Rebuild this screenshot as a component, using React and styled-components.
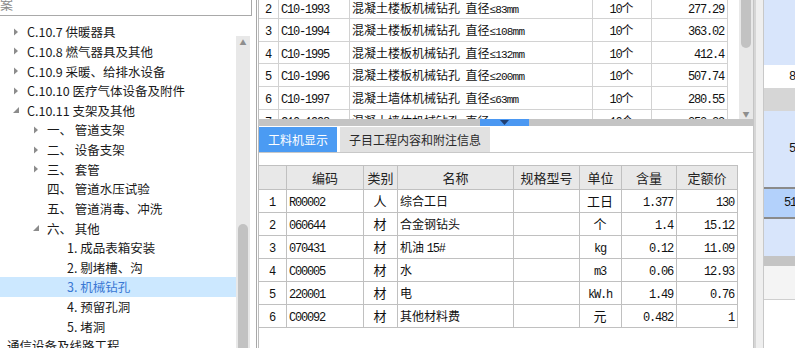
import React from 'react'
import styled, { createGlobalStyle } from 'styled-components'

const CJK = `"Noto Sans CJK SC", "Noto Sans", sans-serif`
const MONO = `"Liberation Mono", "Noto Sans CJK SC", monospace`

const GlobalStyle = createGlobalStyle`
  body { margin:0; background:#fff; overflow:hidden; }
  * { box-sizing:border-box; }
`

const tree = [
  { level: 0, arrow: 'closed', text: 'C.10.7 供暖器具' },
  { level: 0, arrow: 'closed', text: 'C.10.8 燃气器具及其他' },
  { level: 0, arrow: 'closed', text: 'C.10.9 采暖、给排水设备' },
  { level: 0, arrow: 'closed', text: 'C.10.10 医疗气体设备及附件' },
  { level: 0, arrow: 'open', text: 'C.10.11 支架及其他' },
  { level: 1, arrow: 'closed', text: '一、 管道支架' },
  { level: 1, arrow: 'closed', text: '二、 设备支架' },
  { level: 1, arrow: 'closed', text: '三、 套管' },
  { level: 1, text: '四、 管道水压试验' },
  { level: 1, text: '五、 管道消毒、冲洗' },
  { level: 1, arrow: 'open', text: '六、 其他' },
  { level: 2, text: '1. 成品表箱安装' },
  { level: 2, text: '2. 剔堵槽、沟' },
  { level: 2, text: '3. 机械钻孔', selected: true },
  { level: 2, text: '4. 预留孔洞' },
  { level: 2, text: '5. 堵洞' },
  { level: -1, text: '通信设备及线路工程' },
]

const quotas = [
  ['2', 'C10-1993', '混凝土楼板机械钻孔', '≤83mm', '10个', '277.29'],
  ['3', 'C10-1994', '混凝土楼板机械钻孔', '≤108mm', '10个', '363.02'],
  ['4', 'C10-1995', '混凝土楼板机械钻孔', '≤132mm', '10个', '412.4'],
  ['5', 'C10-1996', '混凝土楼板机械钻孔', '≤200mm', '10个', '507.74'],
  ['6', 'C10-1997', '混凝土墙体机械钻孔', '≤63mm', '10个', '280.55'],
  ['7', 'C10-1998', '混凝土墙体机械钻孔', '≤83mm', '10个', '353.23'],
]

const materials = [
  ['1', 'R00002', '人', '综合工日', '', '工日', '1.377', '130'],
  ['2', '060644', '材', '合金钢钻头', '', '个', '1.4', '15.12'],
  ['3', '070431', '材', '机油 15#', '', 'kg', '0.12', '11.09'],
  ['4', 'C00005', '材', '水', '', 'm3', '0.06', '12.93'],
  ['5', '220001', '材', '电', '', 'kW.h', '1.49', '0.76'],
  ['6', 'C00092', '材', '其他材料费', '', '元', '0.482', '1'],
]

const Arrow = ({ type }) =>
  type === 'open' ? (
    <svg width="8" height="8" viewBox="0 0 8 8">
      <path d="M7 1 L7 7 L1 7 Z" fill="#8c8c8c" />
    </svg>
  ) : (
    <svg width="8" height="8" viewBox="0 0 8 8">
      <path d="M2 0.5 L6 4 L2 7.5 Z" fill="#8c8c8c" />
    </svg>
  )

const App = () => {
  return (
    <Screen>
      <GlobalStyle />
      <Sidebar>
        <Search>案</Search>
        <TreeArea>
          <TreeList>
            {tree.map((n, i) => (
              <TreeRow key={i} $pad={n.level < 0 ? 7 : 11 + n.level * 20} $selected={n.selected}>
                {n.level >= 0 && <Slot>{n.arrow && <Arrow type={n.arrow} />}</Slot>}
                {n.text}
              </TreeRow>
            ))}
          </TreeList>
          <VScroll $top={20}>
            <ScrollArrow>▲</ScrollArrow>
            <TreeThumbGap />
            <Thumb />
          </VScroll>
        </TreeArea>
      </Sidebar>

      <Main>
        <TopPane>
          <TopClip>
            <TopGrid>
              {quotas.map((r, i) => (
                <React.Fragment key={i}>
                  <TCell $align="center"><Mono>{r[0]}</Mono></TCell>
                  <TCell><Mono>{r[1]}</Mono></TCell>
                  <TCell>
                    {r[2]}&nbsp;&nbsp;直径<Mono $small>{r[3]}</Mono>
                  </TCell>
                  <TCell $align="center">
                    <Mono>10</Mono>个
                  </TCell>
                  <TCell $align="right"><Mono>{r[5]}</Mono></TCell>
                  <Blank />
                </React.Fragment>
              ))}
            </TopGrid>
          </TopClip>
          <VScroll $top={0}>
            <TopThumb />
            <Fill />
            <ScrollArrow>▼</ScrollArrow>
          </VScroll>
        </TopPane>

        <Splitter>
          <Handle>
            <svg width="9" height="5" viewBox="0 0 9 5">
              <path d="M0 0 L9 0 L4.5 5 Z" fill="#1f3f73" />
            </svg>
          </Handle>
        </Splitter>

        <BottomPane>
          <TabBar>
            <Tab $active>工料机显示</Tab>
            <Tab>子目工程内容和附注信息</Tab>
          </TabBar>
          <TableWrap>
            <BottomGrid>
              <HCell />
              <HCell>编码</HCell>
              <HCell>类别</HCell>
              <HCell>名称</HCell>
              <HCell>规格型号</HCell>
              <HCell>单位</HCell>
              <HCell>含量</HCell>
              <HCell>定额价</HCell>
              {materials.map((r, i) => (
                <React.Fragment key={i}>
                  <BCell $align="center"><Mono>{r[0]}</Mono></BCell>
                  <BCell><Mono>{r[1]}</Mono></BCell>
                  <BCell $align="center" $big>{r[2]}</BCell>
                  <BCell>
                    {r[3].startsWith('机油') ? (
                      <>机油&nbsp;<Mono>15#</Mono></>
                    ) : (
                      r[3]
                    )}
                  </BCell>
                  <BCell>{r[4]}</BCell>
                  <BCell $align="center" $big>
                    {/^[a-zA-Z0-9.]+$/.test(r[5]) ? <Mono>{r[5]}</Mono> : r[5]}
                  </BCell>
                  <BCell $align="right"><Mono>{r[6]}</Mono></BCell>
                  <BCell $align="right"><Mono>{r[7]}</Mono></BCell>
                </React.Fragment>
              ))}
            </BottomGrid>
          </TableWrap>
        </BottomPane>
      </Main>

      <Gutter />

      <RightPanel>
        <RBlock $h={65} $bg="#d8e5fb" />
        <RBlock $h={23} $bg="#ffffff"><Mono>8</Mono></RBlock>
        <RBlock $h={23} $bg="#d6d6d6" />
        <RBlock $h={76} $bg="#d8e5fb"><Mono>5</Mono></RBlock>
        <RBlock $h={32} $bg="#b3d1fb" $sel $pad={20}><Mono>51</Mono></RBlock>
        <RBlock $h={37} $bg="#d8e5fb" />
        <RBlock $h={10} $bg="#c4c4c4" />
        <RBlock $h={34} $bg="#f4f4f4" $line />
      </RightPanel>
    </Screen>
  )
}

export default App

const Screen = styled.div`
  width:795px;
  height:348px;
  display:flex;
  overflow:hidden;
  background:#fff;
  font-family:${CJK};
  color:#1a1a1a;
`

const Sidebar = styled.div`
  width:257px;
  flex:none;
  display:flex;
  flex-direction:column;
  border-right:1px solid #a8a8a8;
`

const Search = styled.div`
  width:252px;
  height:16px;
  border-right:1px solid #a9a9a9;
  border-bottom:1px solid #a9a9a9;
  font-size:13px;
  line-height:8px;
  color:#8a8a8a;
  overflow:hidden;
`

const TreeArea = styled.div`
  flex:1;
  display:flex;
  padding-right:6px;
  min-height:0;
`

const TreeList = styled.div`
  width:237px;
  padding-top:6px;
  overflow:hidden;
`

const TreeRow = styled.div`
  height:19.625px;
  display:flex;
  align-items:center;
  padding-left:${({ $pad }) => $pad}px;
  font-size:12.5px;
  white-space:nowrap;
  background:${({ $selected }) => ($selected ? '#cce8ff' : 'transparent')};
  color:${({ $selected }) => ($selected ? '#3a78d4' : '#1a1a1a')};
`

const Slot = styled.span`
  width:16px;
  flex:none;
  display:flex;
  align-items:center;
  padding-left:1px;
`

const VScroll = styled.div`
  width:14px;
  flex:none;
  margin-top:${({ $top }) => $top}px;
  background:#e8e8e8;
  display:flex;
  flex-direction:column;
  align-items:center;
  overflow:hidden;
`

const ScrollArrow = styled.div`
  font-size:7px;
  line-height:10px;
  height:11px;
  color:#8e8e8e;
  padding-top:1px;
  flex:none;
`

const TreeThumbGap = styled.div`
  height:177px;
  flex:none;
`

const Thumb = styled.div`
  width:10px;
  height:200px;
  flex:none;
  border-radius:5px;
  background:#c2c2c2;
`

const TopThumb = styled.div`
  width:10px;
  height:48px;
  flex:none;
  border-radius:0 0 5px 5px;
  background:#c2c2c2;
`

const Fill = styled.div`
  flex:1;
`

const Main = styled.div`
  width:497px;
  flex:none;
  display:flex;
  flex-direction:column;
  padding-left:1px;
  border-right:1px solid #c4c4c4;
`

const TopPane = styled.div`
  height:119px;
  display:flex;
  flex:none;
`

const TopClip = styled.div`
  flex:1;
  overflow:hidden;
  border-left:1px solid #bdbdbd;
`

const TopGrid = styled.div`
  display:grid;
  grid-template-columns:20px 71px 243px 59px 76px 1fr;
  grid-auto-rows:22.6px;
  margin-top:-3.3px;
`

const TCell = styled.div`
  border-right:1px solid #d2d2d2;
  border-bottom:1px solid #d2d2d2;
  font-size:12px;
  line-height:21.6px;
  text-align:${({ $align }) => $align || 'left'};
  padding:0 3px 0 2px;
  white-space:nowrap;
  overflow:hidden;
  color:#111;
`

const Blank = styled.div``

const Mono = styled.span`
  font-family:${MONO};
  font-size:${({ $small }) => ($small ? 11 : 12)}px;
  letter-spacing:${({ $small }) => ($small ? -0.8 : -1.2)}px;
  color:#111;
`

const Splitter = styled.div`
  height:7px;
  flex:none;
  background:#c4c4c4;
  display:flex;
  padding-left:222px;
`

const Handle = styled.div`
  width:49px;
  background:#4b98f2;
  display:flex;
  justify-content:center;
  align-items:center;
`

const BottomPane = styled.div`
  flex:1;
  display:flex;
  flex-direction:column;
  border-left:1px solid #bdbdbd;
`

const TabBar = styled.div`
  height:27px;
  flex:none;
  display:flex;
  gap:3px;
  align-items:flex-end;
  border-bottom:1px solid #c8c8c8;
`

const Tab = styled.div`
  height:25px;
  padding:0 9px;
  font-size:12px;
  display:flex;
  align-items:center;
  background:${({ $active }) => ($active ? '#4b9bf3' : '#e1e1e1')};
  color:${({ $active }) => ($active ? '#ffffff' : '#2a2a2a')};
`

const TableWrap = styled.div`
  padding-top:12px;
`

const BottomGrid = styled.div`
  display:grid;
  width:479px;
  grid-template-columns:28px 77px 34px 116px 66px 42px 55px 61px;
  grid-template-rows:24px;
  grid-auto-rows:23px;
  border-top:1px solid #c0c0c0;
`

const HCell = styled.div`
  background:#e8e8e8;
  border-right:1px solid #c0c0c0;
  border-bottom:1px solid #c0c0c0;
  font-size:13px;
  display:flex;
  align-items:center;
  justify-content:center;
  color:#222;
`

const BCell = styled.div`
  border-right:1px solid #c0c0c0;
  border-bottom:1px solid #c0c0c0;
  font-size:${({ $big }) => ($big ? 13 : 12)}px;
  line-height:22px;
  text-align:${({ $align }) => $align || 'left'};
  padding:0 3px 0 2px;
  white-space:nowrap;
  overflow:hidden;
  color:#111;
`

const Gutter = styled.div`
  width:10px;
  flex:none;
  background:#efefef;
  border-left:2px solid #d6d6d6;
  border-right:1px solid #c8c8c8;
`

const RightPanel = styled.div`
  flex:1;
  display:flex;
  flex-direction:column;
  overflow:hidden;
`

const RBlock = styled.div`
  height:${({ $h }) => $h}px;
  flex:none;
  background:${({ $bg }) => $bg};
  display:flex;
  align-items:center;
  padding-left:${({ $pad }) => $pad || 25}px;
  white-space:nowrap;
  border-top:${({ $sel }) => ($sel ? '2px solid #8a8a8a' : 'none')};
  border-bottom:${({ $sel, $line }) => ($sel ? '2px solid #8a8a8a' : $line ? '1px solid #cfcfcf' : 'none')};
`
